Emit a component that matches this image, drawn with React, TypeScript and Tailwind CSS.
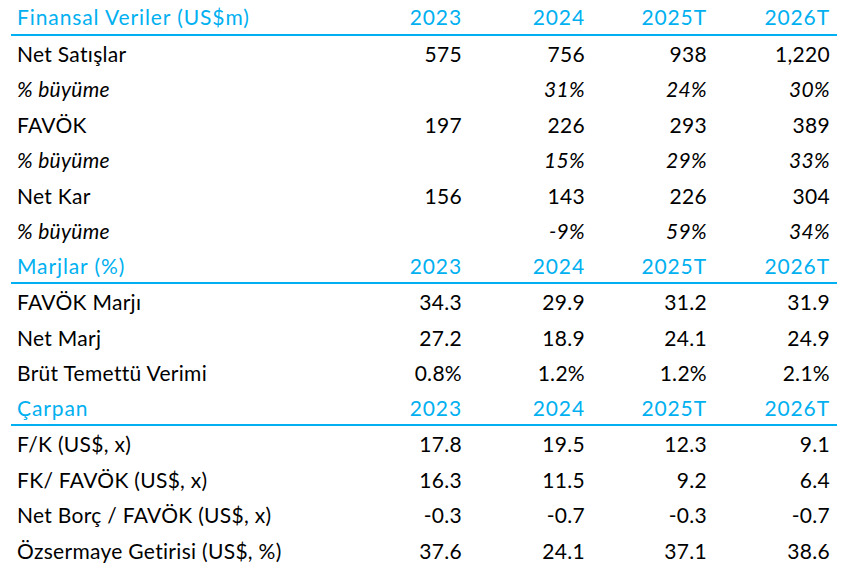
import React from "react";

type Row = { label: string; vals: string[]; kind?: "head" | "pct" };

const rows: Row[] = [
  { label: "Finansal Veriler (US$m)", vals: ["2023", "2024", "2025T", "2026T"], kind: "head" },
  { label: "Net Satışlar", vals: ["575", "756", "938", "1,220"] },
  { label: "% büyüme", vals: ["", "31%", "24%", "30%"], kind: "pct" },
  { label: "FAVÖK", vals: ["197", "226", "293", "389"] },
  { label: "% büyüme", vals: ["", "15%", "29%", "33%"], kind: "pct" },
  { label: "Net Kar", vals: ["156", "143", "226", "304"] },
  { label: "% büyüme", vals: ["", "-9%", "59%", "34%"], kind: "pct" },
  { label: "Marjlar (%)", vals: ["2023", "2024", "2025T", "2026T"], kind: "head" },
  { label: "FAVÖK Marjı", vals: ["34.3", "29.9", "31.2", "31.9"] },
  { label: "Net Marj", vals: ["27.2", "18.9", "24.1", "24.9"] },
  { label: "Brüt Temettü Verimi", vals: ["0.8%", "1.2%", "1.2%", "2.1%"] },
  { label: "Çarpan", vals: ["2023", "2024", "2025T", "2026T"], kind: "head" },
  { label: "F/K (US$, x)", vals: ["17.8", "19.5", "12.3", "9.1"] },
  { label: "FK/ FAVÖK (US$, x)", vals: ["16.3", "11.5", "9.2", "6.4"] },
  { label: "Net Borç / FAVÖK (US$, x)", vals: ["-0.3", "-0.7", "-0.3", "-0.7"] },
  { label: "Özsermaye Getirisi (US$, %)", vals: ["37.6", "24.1", "37.1", "38.6"] },
];

export default function App() {
  return (
    <div className="w-[855px] h-[568px] bg-white overflow-hidden pl-[11px]" style={{ fontFamily: "Lato, 'Open Sans', sans-serif" }}>
      <div className="w-[826px]">
        {rows.map((r, i) => {
          const head = r.kind === "head";
          return (
            <div key={i}
              className={`grid grid-cols-[328px_123px_123px_122px_123px] h-[35.5px] items-center text-[21px] ${head ? "text-[#00b0f0] border-b-2 border-[#00b0f0] tracking-[0.9px]" : "text-black tracking-[0.3px]"} ${r.kind === "pct" ? "italic" : ""}`}>
              <div className="pl-[6px] whitespace-nowrap">{r.label}</div>
              {r.vals.map((v, j) => (
                <div key={j} className="text-right">{v}</div>
              ))}
            </div>
          );
        })}
      </div>
    </div>
  );
}
